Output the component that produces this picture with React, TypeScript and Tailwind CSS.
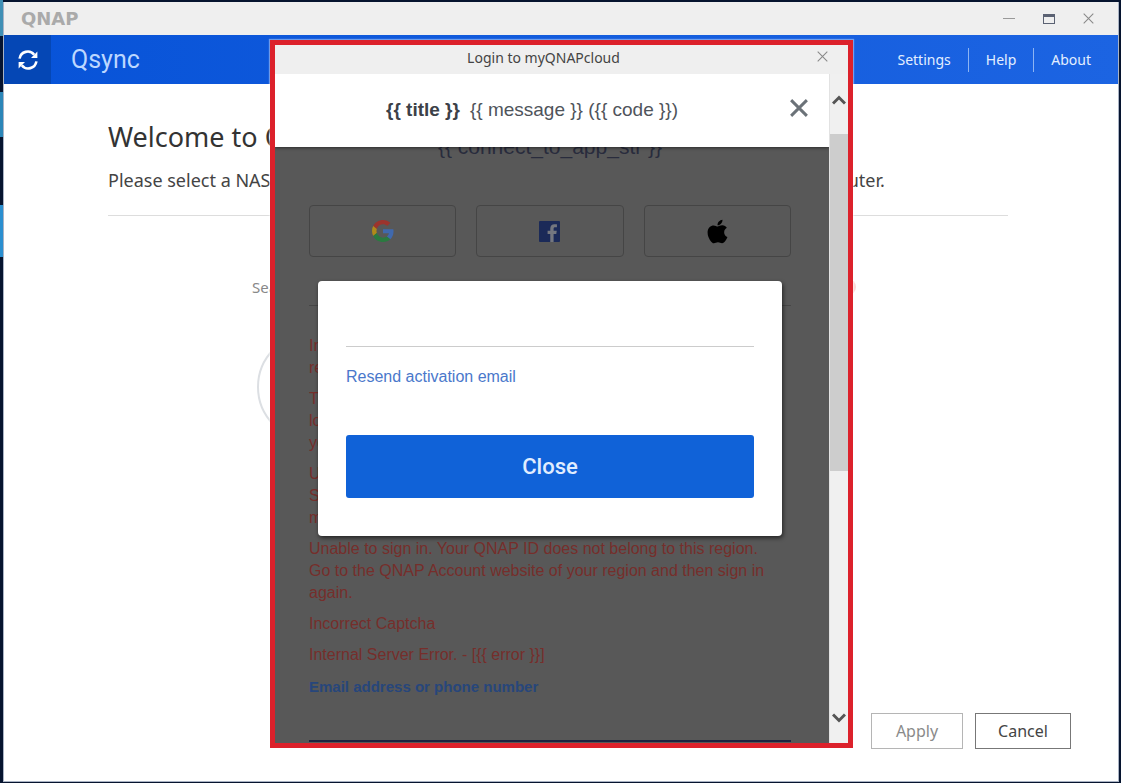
import { FaApple } from "react-icons/fa";

const noto = "font-['Noto_Sans',sans-serif]";
const liberation = "font-['Liberation_Sans',sans-serif]";

const errors: string[][] = [
  ["Incorrect", "retry."],
  ["This", "log", "your"],
  ["Unable to sign in.", "Sign in again in a", "minute."],
  [
    "Unable to sign in. Your QNAP ID does not belong to this region.",
    "Go to the QNAP Account website of your region and then sign in",
    "again.",
  ],
  ["Incorrect Captcha"],
  ["Internal Server Error. - [{{ error }}]"],
];

function SyncIcon() {
  return (
    <svg width="22" height="22" viewBox="0 0 22 22" fill="none" aria-hidden="true">
      <path d="M2.6 9.6A8.2 8.2 0 0 1 17.2 5.8" stroke="#fff" strokeWidth="2.6" />
      <path d="M19.4 12.4A8.2 8.2 0 0 1 4.8 16.2" stroke="#fff" strokeWidth="2.6" />
      <path d="M20.4 2.6V9H14Z" fill="#fff" />
      <path d="M1.6 19.4V13H8Z" fill="#fff" />
    </svg>
  );
}

function GoogleIcon() {
  return (
    <svg width="22" height="22" viewBox="0 0 48 48" aria-hidden="true">
      <path fill="#9c342d" d="M24 9.5c3.54 0 6.71 1.22 9.21 3.6l6.85-6.85C35.9 2.38 30.47 0 24 0 14.62 0 6.51 5.38 2.56 13.22l7.98 6.19C12.43 13.72 17.74 9.5 24 9.5z" />
      <path fill="#4069ae" d="M46.98 24.55c0-1.57-.15-3.09-.38-4.55H24v9.02h12.94c-.58 2.96-2.26 5.48-4.78 7.18l7.73 6c4.51-4.18 7.09-10.36 7.09-17.65z" />
      <path fill="#b08a1a" d="M10.53 28.59c-.48-1.45-.76-2.99-.76-4.59s.27-3.14.76-4.59l-7.98-6.19C.92 16.46 0 20.12 0 24c0 3.88.92 7.54 2.56 10.78l7.97-6.19z" />
      <path fill="#2a7a40" d="M24 48c6.48 0 11.93-2.13 15.89-5.81l-7.73-6c-2.15 1.45-4.92 2.3-8.16 2.3-6.26 0-11.57-4.22-13.47-9.91l-7.98 6.19C6.51 42.62 14.62 48 24 48z" />
    </svg>
  );
}

function FacebookIcon() {
  return (
    <svg width="21" height="21" viewBox="0 0 22 22" aria-hidden="true">
      <rect width="22" height="22" rx="1" fill="#1b2a58" />
      <path fill="#74777f" d="M11.8 22v-8.4H9v-3.3h2.8V7.9c0-2.9 1.8-4.5 4.4-4.5 1.2 0 2.3.1 2.6.2v3H17c-1.4 0-1.7.7-1.7 1.7v2h3.3l-.5 3.3h-2.8V22z" />
    </svg>
  );
}

function Cross({ size, width, color }: { size: number; width: number; color: string }) {
  return (
    <svg width={size} height={size} viewBox="0 0 16 16" aria-hidden="true">
      <path d="M1 1L15 15M15 1L1 15" stroke={color} strokeWidth={width} />
    </svg>
  );
}

function LoginDialog() {
  return (
    <div
      role="dialog"
      aria-label="Login to myQNAPcloud"
      className={`flex w-[583px] flex-col border-[5px] border-[#dc212b] bg-[#efefef] shadow-[0_0_1px_1px_rgba(255,255,255,0.4)] ${liberation}`}
    >
      <div className="relative flex h-[29px] shrink-0 items-center justify-center pr-9">
        <h2 className={`pb-1 text-sm text-[#444] ${noto}`}>Login to myQNAPcloud</h2>
        <button type="button" aria-label="Close window" className="absolute top-1.5 right-5">
          <Cross size={11} width={1.5} color="#888" />
        </button>
      </div>

      <div className="flex min-h-0 flex-1">
        <div className="relative min-w-0 flex-1 overflow-hidden bg-[#585858]">
          <div className="flex flex-col pt-[59px] pr-[38px] pl-[34px]">
            <h3 className="text-center text-[21px] leading-7 text-[#292c3d]">{"{{ connect_to_app_str }}"}</h3>
            <div className="mt-11 grid grid-cols-3 gap-5">
              <button type="button" aria-label="Google" className="flex h-[52px] items-center justify-center rounded border border-[#454545]">
                <GoogleIcon />
              </button>
              <button type="button" aria-label="Facebook" className="flex h-[52px] items-center justify-center rounded border border-[#454545]">
                <FacebookIcon />
              </button>
              <button type="button" aria-label="Apple" className="flex h-[52px] items-center justify-center rounded border border-[#454545]">
                <FaApple size={27} color="#000" />
              </button>
            </div>
            <hr className="mt-12 border-[#474747]" />
            <div className="mt-[29px] flex flex-col gap-[9px] text-base leading-[22px] text-[#762e2b]">
              {errors.map((lines, index) => (
                <p key={index}>
                  {lines.map((line) => (
                    <span key={line} className="block whitespace-nowrap">
                      {line}
                    </span>
                  ))}
                </p>
              ))}
            </div>
            <label htmlFor="account" className="mt-2.5 text-[15px] leading-[22px] font-bold text-[#27467b]">
              Email address or phone number
            </label>
            <input id="account" type="text" className="h-11 border-b-2 border-[#1b2440] bg-transparent outline-none" />
          </div>

          <div className="absolute inset-x-0 top-0 flex h-[73px] items-center justify-between bg-white pr-[21px] pl-[111px] shadow-[0_1px_3px_rgba(0,0,0,0.5)]">
            <p className="text-[19px] text-[#4f545b]">
              <strong className="mr-2.5 text-[#3c4148]">{"{{ title }}"}</strong>
              {"{{ message }} ({{ code }})"}
            </p>
            <button type="button" aria-label="Dismiss message" className="pb-1.5">
              <Cross size={18} width={2.6} color="#6b7278" />
            </button>
          </div>

          <div className="absolute top-[207px] right-[47px] left-[43px] rounded bg-white px-7 pt-[65px] pb-[38px] shadow-[1px_2px_4px_rgba(0,0,0,0.6)]">
            <hr className="border-[#ccc]" />
            <a href="#resend" className="mt-[19px] block text-base leading-[22px] text-[#4a78cb]">
              Resend activation email
            </a>
            <button
              type="button"
              className="mt-[47px] h-[63px] w-full rounded-[3px] bg-[#1062d8] font-['Roboto',sans-serif] text-[22px] font-medium text-[#e0edff]"
            >
              Close
            </button>
          </div>
        </div>

        <div className="flex w-[19px] shrink-0 flex-col items-center border-l border-[#e2e2e2] bg-[#f0f0f0]">
          <div className="flex h-[60px] items-center justify-center pb-2">
            <svg width="14" height="10" viewBox="0 0 14 10" fill="none" aria-hidden="true">
              <path d="M1 8.5L7 2.5L13 8.5" stroke="#555" strokeWidth="3" />
            </svg>
          </div>
          <div className="h-[337px] w-full bg-[#cdcdcd]" />
          <div className="mt-auto pb-5">
            <svg width="14" height="10" viewBox="0 0 14 10" fill="none" aria-hidden="true">
              <path d="M1 1.5L7 7.5L13 1.5" stroke="#555" strokeWidth="3" />
            </svg>
          </div>
        </div>
      </div>
    </div>
  );
}

export default function App() {
  return (
    <div className="relative flex h-screen flex-col bg-[#06142f] pt-0.5 pr-0.5 pb-px pl-[3px]">
      <div className="absolute top-0 left-0 h-9 w-[3px] bg-[#3f8fb5]" />
      <div className="absolute top-[92px] left-0 h-[45px] w-[3px] bg-[#2b86b8]" />
      <div className="absolute top-[205px] left-0 h-[52px] w-[3px] bg-[#2a8fd0]" />

      <div className={`flex min-h-0 flex-1 flex-col border-x border-b border-[#a9b3c4] bg-white ${noto}`}>
        <header className="flex h-[33px] shrink-0 items-center justify-between bg-[#efefef] pr-6 pl-[17px]">
          <span className="font-['DejaVu_Sans',sans-serif] text-lg font-bold text-[#aaa]">QNAP</span>
          <div className="flex items-center gap-7">
            <button type="button" aria-label="Minimize" className="flex h-4 w-3 items-center">
              <span className="h-px w-full bg-[#999]" />
            </button>
            <button type="button" aria-label="Maximize" className="h-[10px] w-3 border border-t-[3px] border-[#5b6273]" />
            <button type="button" aria-label="Close">
              <Cross size={11} width={1.5} color="#888" />
            </button>
          </div>
        </header>

        <div className="flex h-[49px] shrink-0 items-stretch bg-linear-to-r from-[#0753d8] to-[#1c64e2] text-[#e3efff]">
          <div className="flex w-[47px] items-center justify-center bg-[#0547b5]">
            <SyncIcon />
          </div>
          <h1 className="flex flex-1 items-center pl-5 font-['Roboto',sans-serif] text-[25px] text-[#bcd7ff]">Qsync</h1>
          <nav className="flex items-center pr-2.5 text-sm">
            <a href="#settings" className="px-[17px]">
              Settings
            </a>
            <a href="#help" className="border-l border-[#8db4f3] px-[17px] leading-6">
              Help
            </a>
            <a href="#about" className="border-l border-[#8db4f3] px-[17px] leading-6">
              About
            </a>
          </nav>
        </div>

        <main className="flex-1 pt-[33px] pr-[110px] pl-[104px]">
          <h2 className="text-[27px] leading-10 text-[#333]">Welcome to Qsync</h2>
          <p className="mt-[11px] text-lg leading-6 whitespace-nowrap text-[#444]">
            Please select a NAS and the folder that you want to pair and synchronize with this computer.
          </p>
          <hr className="mt-[23px] border-[#ddd]" />
          <div className="mt-[61px] flex justify-between pr-[152px] pl-[144px]">
            <div className="flex flex-col items-center">
              <span className="text-[15px] leading-5 text-[#888]">Search for a NAS</span>
              <span className="mt-9 size-[108px] rounded-full border-2 border-[#dcdfe3]" />
            </div>
            <span className="mt-0.5 size-4 rounded-full bg-[#fbd9d6]" />
          </div>
        </main>

        <footer className="flex justify-end gap-3 pr-[47px] pb-8 text-base">
          <button type="button" className="h-9 w-[92px] border border-[#b5b5b5] text-[#8a8a8a]">
            Apply
          </button>
          <button type="button" className="h-9 w-24 border border-[#777] text-[#444]">
            Cancel
          </button>
        </footer>
      </div>

      <div className="absolute inset-0 flex items-stretch justify-center pt-10 pb-[35px] pl-0.5">
        <LoginDialog />
      </div>
    </div>
  );
}
